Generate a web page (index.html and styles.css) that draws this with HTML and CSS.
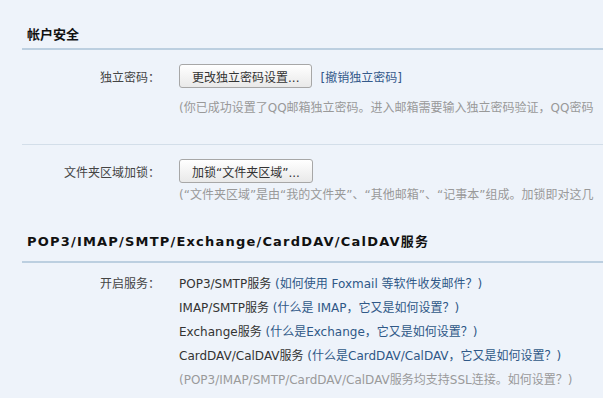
FILE: index.html
```html
<!DOCTYPE html>
<html lang="zh-CN">
<head>
    <meta charset="UTF-8">
    <meta name="viewport" content="width=device-width, initial-scale=1.0">
    <title>设置 - 帐户</title>
    <link rel="stylesheet" href="styles.css">
</head>
<body>
    <div class="page">
        <!-- 帐户安全 -->
        <h2 class="section-title">帐户安全</h2>

        <div class="block">
            <div class="form-row">
                <div class="label">独立密码：</div>
                <div class="value">
                    <button class="btn">更改独立密码设置...</button>
                    <a class="link" href="#">[撤销独立密码]</a>
                </div>
            </div>
            <p class="desc">(你已成功设置了QQ邮箱独立密码。进入邮箱需要输入独立密码验证，QQ密码</p>
        </div>

        <div class="block block-last">
            <div class="form-row">
                <div class="label">文件夹区域加锁：</div>
                <div class="value">
                    <button class="btn">加锁“文件夹区域”...</button>
                </div>
            </div>
            <p class="desc desc-tight">(“文件夹区域”是由“我的文件夹”、“其他邮箱”、“记事本”组成。加锁即对这几</p>
        </div>

        <!-- 服务 -->
        <h2 class="section-title section-title-2">POP3/IMAP/SMTP/Exchange/CardDAV/CalDAV服务</h2>

        <div class="form-row services">
            <div class="label">开启服务：</div>
            <ul class="service-list">
                <li>POP3/SMTP服务 <a class="help" href="#">(如何使用 Foxmail 等软件收发邮件？)</a></li>
                <li>IMAP/SMTP服务 <a class="help" href="#">(什么是 IMAP，它又是如何设置？)</a></li>
                <li>Exchange服务 <a class="help" href="#">(什么是Exchange，它又是如何设置？)</a></li>
                <li>CardDAV/CalDAV服务 <a class="help" href="#">(什么是CardDAV/CalDAV，它又是如何设置？)</a></li>
                <li class="note">(POP3/IMAP/SMTP/CardDAV/CalDAV服务均支持SSL连接。如何设置？)</li>
            </ul>
        </div>
    </div>
</body>
</html>
```

FILE: styles.css
```css
* {
    margin: 0;
    padding: 0;
    box-sizing: border-box;
}

html, body {
    width: 100%;
    height: 100%;
    overflow: hidden;
}

body {
    background: #eef3fa;
    font-family: "DejaVu Sans", "Noto Sans CJK SC", sans-serif;
    font-size: 12px;
    color: #333;
}

.page {
    padding-left: 22px;
    white-space: nowrap;
}

.section-title {
    font-size: 13px;
    font-weight: bold;
    color: #111;
    line-height: 16px;
    padding: 27px 0 5px 5px;
    border-bottom: 2px solid #bccfe0;
}

.section-title-2 {
    padding-top: 29px;
    padding-bottom: 11px;
    letter-spacing: 1.2px;
}

.block {
    padding-top: 14px;
    padding-bottom: 26px;
    border-bottom: 1px solid #d3dee9;
}

.block-last {
    border-bottom: none;
    padding-bottom: 0;
}

.form-row {
    display: flex;
    align-items: center;
}

.label {
    width: 138px;
    margin-right: 19px;
    text-align: right;
    color: #444;
}

.value {
    display: flex;
    align-items: center;
}

.btn {
    height: 24px;
    padding: 0 12px;
    border: 1px solid #a7a7a7;
    border-radius: 3px;
    background: linear-gradient(#ffffff, #e9e9e9);
    font-family: inherit;
    font-size: 12px;
    color: #333;
}

.link {
    margin-left: 8px;
    color: #34598a;
    text-decoration: none;
}

.desc {
    margin: 10px 0 0 157px;
    line-height: 20px;
    color: #999;
}

.desc-tight {
    margin-top: 2px;
}

.services {
    align-items: flex-start;
    margin-top: 9px;
}

.services .label {
    line-height: 24px;
}

.service-list {
    list-style: none;
}

.service-list li {
    line-height: 24px;
    color: #333;
}

.help {
    color: #2f5887;
    text-decoration: none;
}

.service-list .note {
    color: #9a9a9a;
}
```
